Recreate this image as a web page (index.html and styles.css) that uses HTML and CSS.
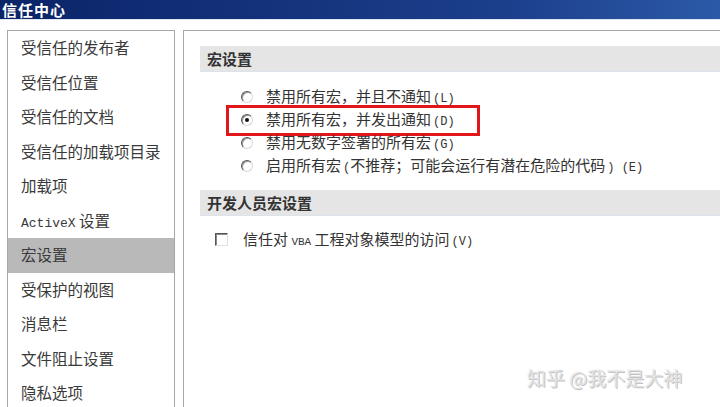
FILE: index.html
```html
<!DOCTYPE html>
<html lang="zh-CN">
<head>
    <meta charset="UTF-8">
    <meta name="viewport" content="width=device-width, initial-scale=1.0">
    <title>信任中心</title>
    <link rel="stylesheet" href="styles.css">
</head>
<body>
    <div class="window">
        <div class="title-bar">信任中心</div>
        <div class="content">
            <ul class="side-nav">
                <li>受信任的发布者</li>
                <li>受信任位置</li>
                <li>受信任的文档</li>
                <li>受信任的加载项目录</li>
                <li>加载项</li>
                <li><span class="mono">ActiveX</span> 设置</li>
                <li class="active">宏设置</li>
                <li>受保护的视图</li>
                <li>消息栏</li>
                <li>文件阻止设置</li>
                <li>隐私选项</li>
            </ul>
            <div class="panel">
                <div class="section-title">宏设置</div>
                <div class="options">
                    <div class="option"><span class="radio"></span>禁用所有宏，并且不通知<span class="key">(L)</span></div>
                    <div class="option highlight"><span class="radio checked"></span>禁用所有宏，并发出通知<span class="key">(D)</span></div>
                    <div class="option"><span class="radio"></span>禁用无数字签署的所有宏<span class="key">(G)</span></div>
                    <div class="option"><span class="radio"></span>启用所有宏<span class="key">(</span>不推荐；可能会运行有潜在危险的代码<span class="key">) (E)</span></div>
                </div>
                <div class="section-title">开发人员宏设置</div>
                <div class="options checks">
                    <div class="option"><span class="checkbox"></span>信任对 <span class="mono small">VBA</span> 工程对象模型的访问<span class="key">(V)</span></div>
                </div>
            </div>
        </div>
        <div class="watermark">知乎 @我不是大神</div>
    </div>
</body>
</html>
```

FILE: styles.css
```css
* {
    box-sizing: border-box;
}
body {
    margin: 0;
    width: 720px;
    height: 407px;
    overflow: hidden;
    background: #fff;
    font-family: "Noto Sans CJK SC", "Noto Sans", sans-serif;
    color: #333;
}
.window {
    position: relative;
    height: 407px;
    overflow: hidden;
}
.title-bar {
    height: 19px;
    line-height: 19px;
    padding-left: 2px;
    background: linear-gradient(to right, #0b2468, #1c3f8c 70%, #2c5aa8);
    color: #fff;
    font-size: 15px;
    font-weight: bold;
    letter-spacing: 1px;
}
.content {
    display: flex;
    gap: 8px;
    padding: 10px 0 0 7px;
    border-top: 1px solid #dfe6ef;
}
.side-nav {
    list-style: none;
    margin: 0;
    padding: 0;
    width: 168px;
    height: 420px;
    border: 1px solid #a6a6a6;
    border-bottom: none;
}
.side-nav li {
    height: 34.5px;
    line-height: 32px;
    padding-left: 13px;
    font-size: 15.5px;
    color: #3a3a3a;
    white-space: nowrap;
}
.side-nav li.active {
    background: #b9b9b9;
}
.mono {
    font-family: "Liberation Mono", "DejaVu Sans Mono", monospace;
    font-size: 13px;
}
.mono.small {
    font-size: 11px;
}
.panel {
    flex: 1;
    height: 420px;
    padding: 15px 0 0 16px;
    border-left: 1px solid #a6a6a6;
    border-top: 1px solid #a6a6a6;
}
.section-title {
    height: 26px;
    line-height: 25px;
    padding-left: 7px;
    background: #e5e5e5;
    border-bottom: 1px solid #dde3ea;
    font-size: 15px;
    font-weight: bold;
    color: #333;
}
.options {
    padding: 13px 0 13px 41px;
}
.options.checks {
    padding: 12px 0 0 15px;
}
.option {
    position: relative;
    height: 23px;
    line-height: 22px;
    font-size: 15px;
    color: #333;
    white-space: nowrap;
}
.key {
    font-family: "Liberation Mono", "DejaVu Sans Mono", monospace;
    font-size: 12px;
    margin-left: 2px;
}
.radio {
    position: relative;
    display: inline-block;
    vertical-align: -1px;
    width: 12px;
    height: 12px;
    margin-right: 13px;
    border-radius: 50%;
    border: 1px solid;
    border-color: #555 #d8d8d8 #d8d8d8 #555;
    background: #fff;
    box-shadow: inset 1px 1px 0 #9a9a9a;
}
.radio.checked::after {
    content: "";
    position: absolute;
    left: 3px;
    top: 3px;
    width: 4px;
    height: 4px;
    border-radius: 50%;
    background: #111;
}
.checkbox {
    display: inline-block;
    vertical-align: -1px;
    width: 13px;
    height: 13px;
    margin-right: 15px;
    border: 1px solid;
    border-color: #555 #e0e0e0 #e0e0e0 #555;
    background: #fff;
    box-shadow: inset 1px 1px 0 #8a8a8a;
}
.highlight::after {
    content: "";
    position: absolute;
    left: -15px;
    top: -3px;
    width: 248px;
    height: 25px;
    border: 3px solid #e0161b;
}
.watermark {
    position: absolute;
    left: 527px;
    top: 364px;
    font-size: 19px;
    color: #e2e2e2;
    text-shadow: 1px 1px 0 #c2c2c2, -1px -1px 0 #fafafa;
}
```
